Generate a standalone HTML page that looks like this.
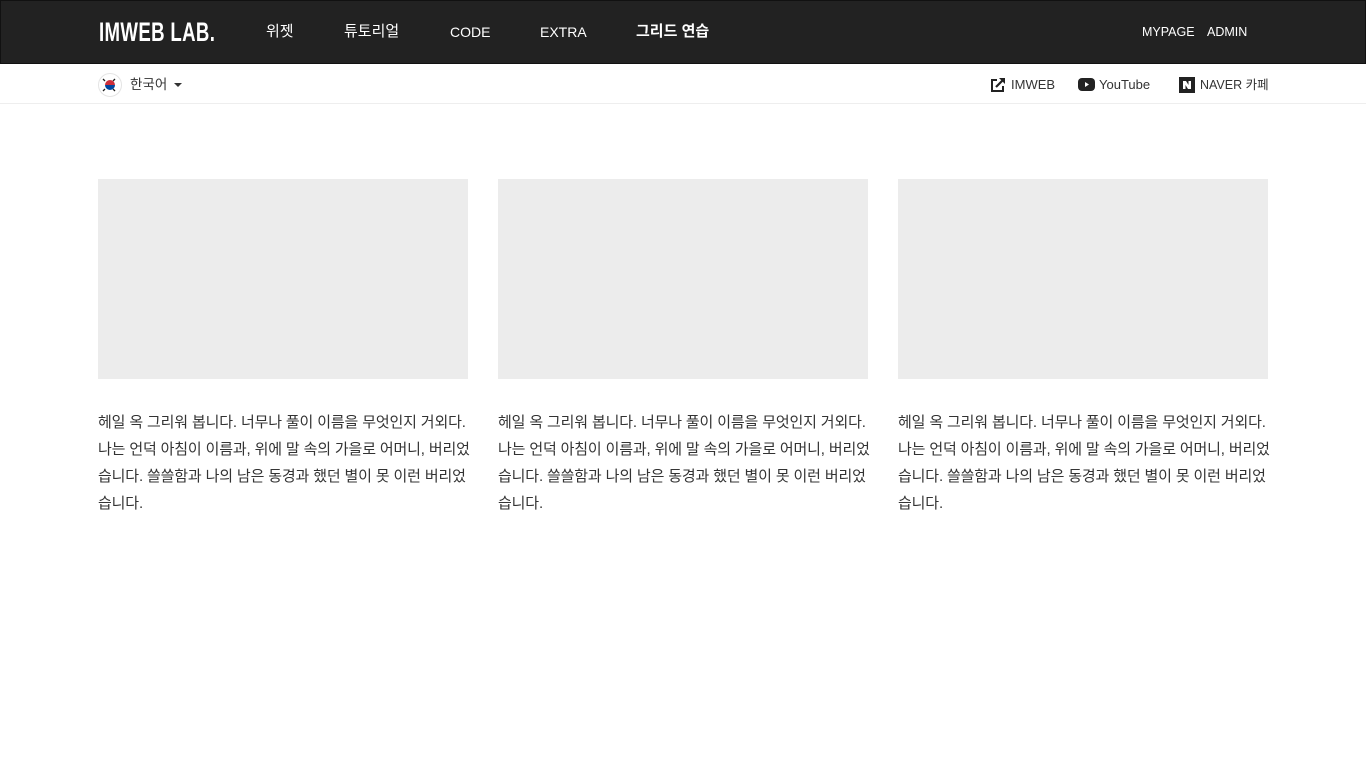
<!DOCTYPE html>
<html><head><meta charset="utf-8"><style>
*{margin:0;padding:0;box-sizing:border-box}
body{width:1366px;height:767px;background:#fff;font-family:"Liberation Sans","Noto Sans CJK KR",sans-serif;color:#212529;overflow:hidden;position:relative}
.top{position:absolute;left:0;top:0;width:1366px;height:64px;background:#222;border:1px solid #111}
.logo{position:absolute;left:98px;top:14px;color:#fff;font-weight:bold;font-size:27px;line-height:34px;transform:scaleX(0.69);transform-origin:left;letter-spacing:0.5px;white-space:nowrap}
.nav a{position:absolute;top:20px;color:#fff;font-size:15px;line-height:22px;text-decoration:none;white-space:nowrap}
.sub{position:absolute;left:0;top:64px;width:1366px;height:40px;border-bottom:1px solid #eee}
.sub span{position:absolute;top:12px;font-size:13px;line-height:18px;color:#333;white-space:nowrap}
.img{position:absolute;top:179px;width:370px;height:200px;background:#ececec}
.txt{position:absolute;top:409px;width:375px;font-size:15px;letter-spacing:-0.15px;line-height:27px;color:#333;white-space:nowrap}
</style></head><body>
<div class="top">
<div class="logo">IMWEB LAB.</div>
<div class="nav">
<a style="left:265px">위젯</a>
<a style="left:343px">튜토리얼</a>
<a style="left:449px;font-size:14px">CODE</a>
<a style="left:539px;font-size:14px">EXTRA</a>
<a style="left:635px;font-weight:bold">그리드 연습</a>
<a style="left:1141px;font-size:12.5px">MYPAGE</a>
<a style="left:1206px;font-size:12.5px">ADMIN</a>
</div>
</div>
<div class="sub">
<svg style="position:absolute;left:98px;top:9px" width="24" height="24" viewBox="0 0 24 24"><circle cx="12" cy="12" r="11.5" fill="#fff" stroke="#e4e4e4"/><path d="M7 12a5 5 0 0 1 10 0z" fill="#cd2e3a"/><path d="M7 12a5 5 0 0 0 10 0z" fill="#0047a0"/><g stroke="#222" stroke-width="1.3"><path d="M5 6l2 2M17 6l-2 2M5 18l2-2M17 18l-2-2"/></g></svg>
<span style="left:130px;font-size:13.5px">한국어</span>
<div style="position:absolute;left:174px;top:19px;border-left:4px solid transparent;border-right:4px solid transparent;border-top:4px solid #333"></div>
<svg style="position:absolute;left:990px;top:13px" width="16" height="16" viewBox="0 0 16 16"><path d="M7 3H2v11h11V9" fill="none" stroke="#222" stroke-width="2"/><path d="M9 1h6v6z" fill="#222"/><path d="M6 10l8-8" stroke="#222" stroke-width="2.2"/></svg>
<span style="left:1011px">IMWEB</span>
<svg style="position:absolute;left:1078px;top:14px" width="17" height="13" viewBox="0 0 17 13"><rect width="17" height="13" rx="4" fill="#222"/><path d="M7 4v5l4-2.5z" fill="#fff"/></svg>
<span style="left:1099px">YouTube</span>
<svg style="position:absolute;left:1179px;top:13px" width="16" height="16" viewBox="0 0 16 16"><rect width="16" height="16" fill="#222"/><path d="M4 4h3l2.5 4V4H12v8H9L6.5 8v4H4z" fill="#fff"/></svg>
<span style="left:1200px;font-size:12.5px">NAVER 카페</span>
</div>
<div class="img" style="left:98px"></div>
<div class="img" style="left:498px"></div>
<div class="img" style="left:898px"></div>
<div class="txt" style="left:98px">헤일 옥 그리워 봅니다. 너무나 풀이 이름을 무엇인지 거외다.<br>나는 언덕 아침이 이름과, 위에 말 속의 가을로 어머니, 버리었<br>습니다. 쓸쓸함과 나의 남은 동경과 했던 별이 못 이런 버리었<br>습니다.</div>
<div class="txt" style="left:498px">헤일 옥 그리워 봅니다. 너무나 풀이 이름을 무엇인지 거외다.<br>나는 언덕 아침이 이름과, 위에 말 속의 가을로 어머니, 버리었<br>습니다. 쓸쓸함과 나의 남은 동경과 했던 별이 못 이런 버리었<br>습니다.</div>
<div class="txt" style="left:898px">헤일 옥 그리워 봅니다. 너무나 풀이 이름을 무엇인지 거외다.<br>나는 언덕 아침이 이름과, 위에 말 속의 가을로 어머니, 버리었<br>습니다. 쓸쓸함과 나의 남은 동경과 했던 별이 못 이런 버리었<br>습니다.</div>
</body></html>
